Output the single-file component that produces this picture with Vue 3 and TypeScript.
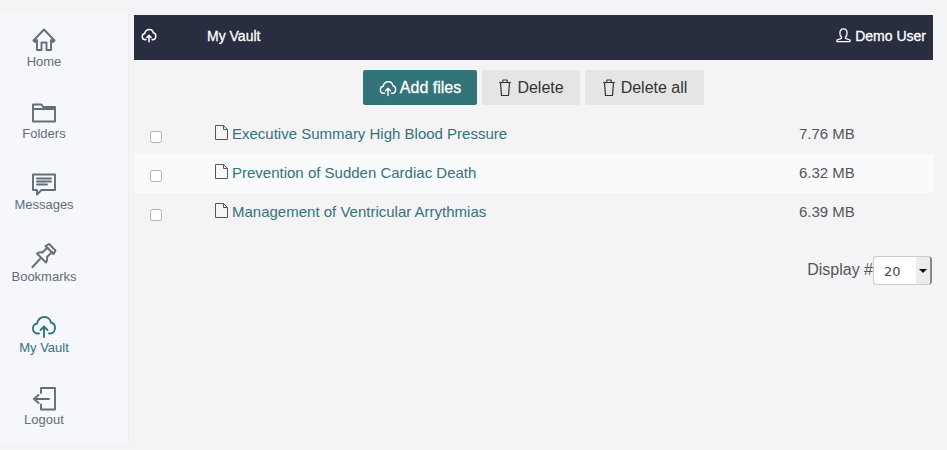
<script setup lang="ts">
interface FileRow { name: string; size: string }
const files: FileRow[] = [
  { name: 'Executive Summary High Blood Pressure', size: '7.76 MB' },
  { name: 'Prevention of Sudden Cardiac Death', size: '6.32 MB' },
  { name: 'Management of Ventricular Arrythmias', size: '6.39 MB' },
]
const nav = ['Home', 'Folders', 'Messages', 'Bookmarks', 'My Vault', 'Logout']
</script>

<template>
  <div class="page">
    <aside class="side">
      <a v-for="n in nav" :key="n" class="nav" :class="{ active: n === 'My Vault' }">
        <svg class="nav-icon" viewBox="0 0 26 26" width="26" height="26" fill="none" stroke="currentColor" stroke-width="1.900" stroke-linejoin="round" stroke-linecap="round">
          <template v-if="n === 'Home'">
            <path d="M2.500 13.500 13 2.500l10.500 11-1.500 1.500-2-2v10h-4.500v-7.500h-5V23H6V13l-2 2z" />
          </template>
          <template v-else-if="n === 'Folders'">
            <path d="M2 7V22.500h22V8H12L10.500 5.500H2V7M2 10h22" />
          </template>
          <template v-else-if="n === 'Messages'">
            <path d="M2 4.500h22V20H10.500L6 24.500V20H2z" />
            <path d="M6 8.500h14M6 11.500h14M6 14.500h10" />
          </template>
          <template v-else-if="n === 'Bookmarks'">
            <path d="M1.500 25 9 17" />
            <path d="M6 11.500 15 20.500M6 11.500c2.500-1.500 4-1.500 5.500-1L16.500 5.500M15 20.500c1.500-2.500 1.500-4 1-5.500L21 10" />
            <path d="M14.500 4 22.500 12l2-3.500L18 2z" />
          </template>
          <template v-else-if="n === 'My Vault'">
            <path d="M8 20.500H6.500C3.500 20.500 2 18 2 15.500c0-2.500 1.500-4.500 4-5C7 6.500 10 4 13.500 4c3.500 0 6 2.500 6.500 5.500 2.500.5 4 2.500 4 5.500s-2 5.500-5 5.500h-1" />
            <path d="M13 24V13.500M9.500 17l3.500-3.500 3.500 3.500" />
          </template>
          <template v-else>
            <path d="M10 8V3h14v21.500H10v-5" />
            <path d="M18 14H3M7.500 10 3 14l4.500 4" />
          </template>
        </svg>
        <span class="nav-label">{{ n }}</span>
      </a>
    </aside>

    <main class="main">
      <header class="bar">
        <svg class="bar-cloud" viewBox="0 0 26 26" width="16" height="16" fill="none" stroke="currentColor" stroke-width="2.500" stroke-linecap="round" stroke-linejoin="round">
          <path d="M8 20.500H6.500C3.500 20.500 2 18 2 15.500c0-2.500 1.500-4.500 4-5C7 6.500 10 4 13.500 4c3.500 0 6 2.500 6.500 5.500 2.500.5 4 2.500 4 5.500s-2 5.500-5 5.500h-1" />
          <path d="M13 24V13.500M9.500 17l3.500-3.500 3.500 3.500" />
        </svg>
        <span class="bar-title">My Vault</span>
        <span class="bar-user">
          <svg viewBox="0 0 16 16" width="15" height="15" fill="none" stroke="currentColor" stroke-width="1.400" stroke-linejoin="round">
            <path d="M1 14.500v-1.700L5.800 11V9.700C4.700 8.800 4.200 7.500 4.200 5.500 4.200 2.800 5.700 1 8 1s3.800 1.800 3.800 4.500c0 2-.5 3.300-1.600 4.200V11l4.800 1.800v1.700z" />
          </svg>
          Demo User
        </span>
      </header>

      <div class="actions">
        <button class="btn primary">
          <svg viewBox="0 0 26 26" width="18" height="18" fill="none" stroke="currentColor" stroke-width="2" stroke-linecap="round" stroke-linejoin="round">
            <path d="M8 20.500H6.500C3.500 20.500 2 18 2 15.500c0-2.500 1.500-4.500 4-5C7 6.500 10 4 13.500 4c3.500 0 6 2.500 6.500 5.500 2.500.5 4 2.500 4 5.500s-2 5.500-5 5.500h-1" />
            <path d="M13 24V13.500M9.500 17l3.500-3.500 3.500 3.500" />
          </svg>
          Add files
        </button>
        <button v-for="label in ['Delete', 'Delete all']" :key="label" class="btn plain">
          <svg viewBox="0 0 14 18" width="14" height="18" fill="none" stroke="currentColor" stroke-width="1.200" stroke-linejoin="round">
            <path d="M1 3.500h12M4.500 3.500l.5-2.500h4l.5 2.500M2.500 3.500l1 13h7l1-13" />
          </svg>
          {{ label }}
        </button>
      </div>

      <div class="rows">
        <div v-for="f in files" :key="f.name" class="row">
          <span class="check"><input type="checkbox" class="box" /></span>
          <svg class="doc" viewBox="0 0 13 15" width="13" height="15" fill="none" stroke="currentColor" stroke-width="1" stroke-linejoin="round">
            <path d="M.5.500h8l4 4v10H.5zM8.500.500v4h4" />
          </svg>
          <a class="name">{{ f.name }}</a>
          <span class="size">{{ f.size }}</span>
        </div>
      </div>

      <div class="pager">
        <span class="pager-label">Display #</span>
        <span class="select">
          <span class="select-val">20</span>
          <span class="select-arrow"></span>
        </span>
      </div>
    </main>
  </div>
</template>

<style>
html, body { margin: 0; background: #f4f4f7; }
</style>

<style scoped>
.page {
  display: flex;
  width: 947px;
  height: 450px;
  box-sizing: border-box;
  padding-top: 14px;
  padding-bottom: 7px;
  background: #f4f4f7;
  font-family: "Liberation Sans", Arial, sans-serif;
  overflow: hidden;
}
.side {
  width: 129px;
  box-sizing: border-box;
  flex: none;
  background: #f6f7fa;
  border-right: 1px solid #ececf0;
  display: flex;
  flex-direction: column;
  align-items: center;
  padding: 13px 40px 0 0;
}
.nav {
  height: 71.500px;
  flex: none;
  display: flex;
  flex-direction: column;
  align-items: center;
  color: #626d7b;
  font-size: 13px;
}
.nav.active { color: #33737a; }
.nav-icon { display: block; }
.nav-label { line-height: 16px; margin-top: 1px; }
.main { margin-left: 5px; width: 799px; flex: none; padding-top: 1px; }
.bar {
  height: 45px;
  box-sizing: border-box;
  background: #282d40;
  color: #fff;
  display: flex;
  align-items: center;
  padding: 0 7px 4px 7px;
  font-size: 14px;
  -webkit-text-stroke: 0.3px #fff;
}
.bar-cloud { flex: none; margin-bottom: 2px; }
.bar-title { margin-left: 50px; }
.bar-user { margin-left: auto; display: flex; align-items: center; gap: 4px; }
.actions {
  display: flex;
  justify-content: center;
  gap: 5px;
  margin-top: 10px;
}
.btn {
  height: 35px;
  border: 0;
  border-radius: 2px;
  font: inherit;
  font-size: 16px;
  display: flex;
  align-items: center;
  justify-content: center;
  padding: 0;
  gap: 5px;
}
.primary { width: 114px; background: #33737a; color: #fff; -webkit-text-stroke: 0.3px #fff; gap: 3px; }
.plain { background: #e5e5e5; color: #333; width: 98px; }
.plain + .plain { width: 119px; }
.rows { margin-top: 10px; }
.row {
  height: 39px;
  display: flex;
  align-items: center;
  font-size: 15px;
}
.row:nth-child(even) { background: #f9fafc; }
.check { width: 80px; padding-left: 16px; box-sizing: border-box; flex: none; display: flex; padding-top: 4px; }
.box {
  appearance: none;
  margin: 0;
  width: 12px;
  height: 12px;
  border: 1px solid #b5b5b5;
  border-radius: 2px;
  background: #fff;
}
.doc { color: #555; flex: none; margin: -4px 4px 0 1px; }
.name { color: #33737a; flex: 1; padding-bottom: 3px; }
.size { color: #555; width: 134px; flex: none; padding-bottom: 3px; }
.pager {
  display: flex;
  justify-content: flex-end;
  align-items: center;
  margin-top: 24px;
  margin-right: 1px;
  color: #555;
  font-size: 16px;
}
.pager-label { padding-bottom: 2px; }
.select {
  width: 59px;
  height: 29px;
  box-sizing: border-box;
  border: 1px solid #ccc;
  border-radius: 4px;
  background: #fff;
  display: flex;
  align-items: center;
  justify-content: space-between;
  overflow: hidden;
  border-right: 2px solid #888;
  font-family: "DejaVu Sans", sans-serif;
  font-size: 13px;
}
.select-val { padding-left: 10px; padding-top: 1px; color: #444; }
.select-arrow {
  width: 14px;
  height: 100%;
  background: #ececec;
  position: relative;
}
.select-arrow::after {
  content: "";
  position: absolute;
  left: 3px;
  top: 12px;
  border: 4px solid transparent;
  border-top: 4px solid #111;
  border-bottom: 0;
}
</style>
